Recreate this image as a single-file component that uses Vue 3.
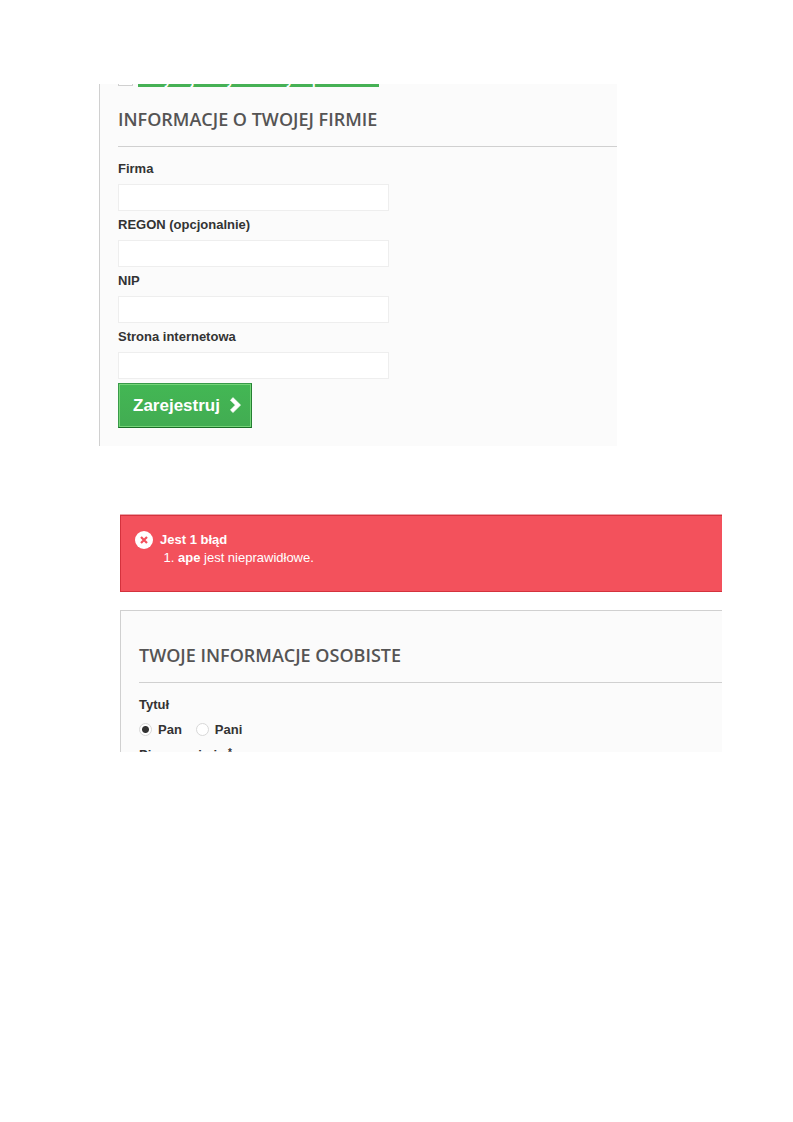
<script setup>
import { ref } from 'vue'

const fields = [
  { id: 'company', label: 'Firma' },
  { id: 'regon', label: 'REGON (opcjonalnie)' },
  { id: 'nip', label: 'NIP' },
  { id: 'website', label: 'Strona internetowa' },
]
const values = ref({ company: '', regon: '', nip: '', website: '' })
const title = ref('pan')
</script>

<template>
  <main class="page">
    <form class="panel company" @submit.prevent>
      <div class="offers">
        <input id="offers" class="check" type="checkbox" />
        <label class="offers-label" for="offers">Otrzymuj oferty od naszych partnerów!</label>
      </div>
      <h2 class="heading">INFORMACJE O TWOJEJ FIRMIE</h2>
      <div v-for="f in fields" :key="f.id" class="field">
        <label :for="f.id">{{ f.label }}</label>
        <input :id="f.id" v-model="values[f.id]" type="text" />
      </div>
      <button class="submit" type="submit">
        <span>Zarejestruj</span>
        <svg width="12" height="18" viewBox="0 0 12 18" aria-hidden="true">
          <path d="M3 .6 L10.6 8.1 L3 15.6 L.4 13 L5.3 8.1 L.4 3.2 Z" fill="#fff" stroke="#fff" stroke-width=".6" stroke-linejoin="round" />
        </svg>
      </button>
    </form>

    <div class="alert" role="alert">
      <svg width="18" height="18" viewBox="0 0 18 18" aria-hidden="true">
        <circle cx="9" cy="9" r="9" fill="#fff" />
        <path d="M6 6 L12 12 M12 6 L6 12" stroke="#f3515c" stroke-width="2.2" />
      </svg>
      <div>
        <p class="alert-title">Jest 1 błąd</p>
        <ol class="errors">
          <li><b>ape</b> jest nieprawidłowe.</li>
        </ol>
      </div>
    </div>

    <form class="panel personal" @submit.prevent>
      <h2 class="heading">TWOJE INFORMACJE OSOBISTE</h2>
      <fieldset class="titles">
        <legend>Tytuł</legend>
        <div class="options">
          <label><input v-model="title" type="radio" name="title" value="pan" />Pan</label>
          <label><input v-model="title" type="radio" name="title" value="pani" />Pani</label>
        </div>
      </fieldset>
      <div class="cut">Pierwsze imię <sup>*</sup></div>
    </form>
  </main>
</template>

<style>
body {
  margin: 0;
  background: #fff;
}
</style>

<style scoped>
.page {
  padding: 84px 71px 84px 99px;
  font: 13px/18px "Liberation Sans", Arial, sans-serif;
  color: #333;
}
.panel {
  background: #fbfbfb;
  border-left: 1px solid #d0d0d0;
  padding-left: 18px;
}
.company {
  margin-right: 105px;
  padding-bottom: 18px;
}
.offers {
  display: flex;
  align-items: flex-end;
  gap: 5px;
  height: 3px;
  overflow: hidden;
}
.check {
  appearance: none;
  flex: none;
  box-sizing: border-box;
  width: 15px;
  height: 15px;
  margin: 0 0 1px;
  border: 1px solid #d0d0d0;
  background: #fff;
}
.offers-label {
  flex: none;
  background: #46b155;
  color: #fff;
  font-weight: bold;
  line-height: 15px;
}
.heading {
  margin: 0 0 12px;
  padding: 20px 0 15px;
  border-bottom: 1px solid #d0d0d0;
  color: #555454;
  font: 600 18px/24px "Open Sans", sans-serif;
}
.field label {
  display: block;
  padding: 1px 0 6px;
  font-weight: bold;
}
.field input {
  display: block;
  box-sizing: border-box;
  width: 271px;
  max-width: 100%;
  height: 27px;
  margin: 0 0 4px;
  padding: 3px 5px;
  border: 1px solid #eee;
  background: #fff;
  font: inherit;
}
.submit {
  display: flex;
  align-items: center;
  gap: 10px;
  height: 45px;
  padding: 0 9px 0 14px;
  border: 1px solid;
  border-color: #399a49 #247f32 #1a6d27 #399a49;
  background: linear-gradient(#43b754, #42ac52);
  box-shadow: inset 0 0 0 1px #74d578;
  color: #fff;
  font: bold 17px/21px "Liberation Sans", Arial, sans-serif;
}
.alert {
  display: flex;
  gap: 7px;
  margin: 69px 0 18px 21px;
  padding: 15px 14px 24px;
  border: 1px solid #d4323d;
  border-right: 0;
  background: #f3515c;
  box-shadow: 0 -1px #eaa5aa;
  color: #fff;
}
.alert-title {
  margin: 0;
  font-weight: bold;
}
.errors {
  margin: 0;
  padding-left: 18px;
}
.personal {
  margin-left: 21px;
  border-top: 1px solid #d0d0d0;
}
.personal .heading {
  padding-top: 32px;
}
.titles {
  margin: 0;
  padding: 1px 0 0;
  border: 0;
  font-weight: bold;
}
.titles legend {
  padding: 1px 0 0;
}
.options {
  display: flex;
  gap: 14px;
  padding: 6px 0 7px;
}
.options label {
  display: flex;
  align-items: flex-start;
  gap: 6px;
}
.options input {
  appearance: none;
  box-sizing: border-box;
  width: 13px;
  height: 13px;
  margin: 2px 0 0;
  border: 1px solid #d8d8d8;
  border-radius: 50%;
  background: #fff;
}
.options input:checked {
  background: radial-gradient(circle, #333 3px, #fff 4px);
}
.cut {
  height: 6px;
  overflow: hidden;
  font-weight: bold;
}
.cut sup {
  font-size: 10px;
  line-height: 10px;
  vertical-align: 3px;
}
</style>
